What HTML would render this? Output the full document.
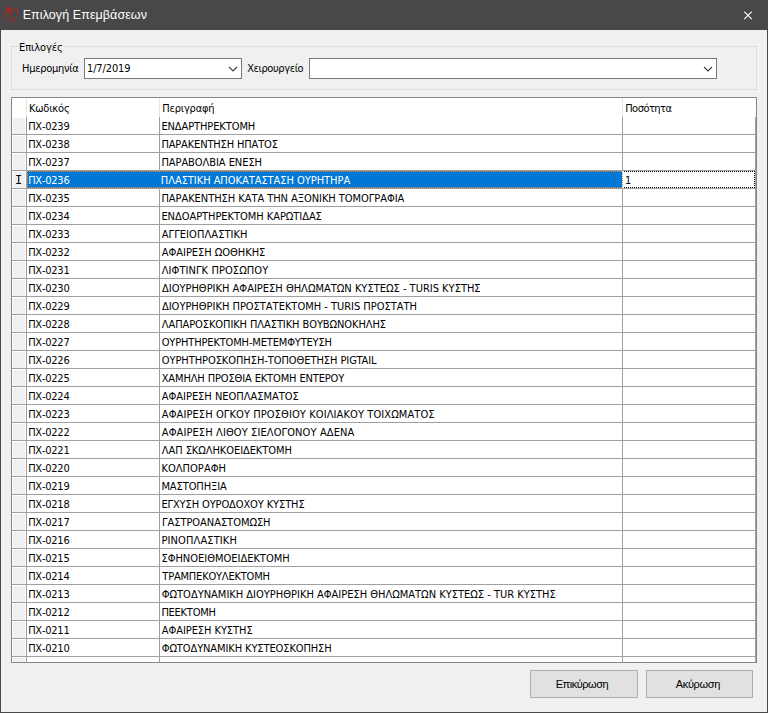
<!DOCTYPE html><html lang="el"><head><meta charset="utf-8"><title>Επιλογή Επεμβάσεων</title><style>
*{box-sizing:border-box;margin:0;padding:0}
html,body{width:768px;height:713px;overflow:hidden;background:#f0f0f0}
body{position:relative;font-family:"DejaVu Sans Condensed","Liberation Sans",sans-serif;font-size:11px;color:#000;line-height:1}
.abs{position:absolute}
#title{left:0;top:0;width:768px;height:30px;background:#484848}
#bl{left:0;top:30px;width:1px;height:683px;background:#484848}
#br{left:767px;top:30px;width:1px;height:683px;background:#484848}
#bb{left:0;top:712px;width:768px;height:1px;background:#484848}
#ttext{left:23px;top:7px;color:#fff;font-family:"Liberation Sans",sans-serif;font-size:12.5px;white-space:nowrap;line-height:16px}
#grp{left:11px;top:46px;width:746px;height:44px;border:1px solid #dcdcdc}
#grplbl{left:18px;top:41px;width:46px;height:13px;background:#f0f0f0}
.t{position:absolute;white-space:nowrap;line-height:13px}
.combo{background:#fff;border:1px solid #7a7a7a;height:21px}
#grid{left:11px;top:97px;width:746px;height:566px;border:1px solid #828790;background:#fff;overflow:hidden}
.hline{position:absolute;left:0;width:744px;height:1px;background:#a0a0a0}
.vline{position:absolute;top:19px;width:1px;height:547px;background:#a0a0a0}
.vlh{position:absolute;top:0;width:1px;height:19px;background:#e5e5e5}
.rh{position:absolute;left:1px;width:12px;background:#f0f0f0}
.btn{background:#e1e1e1;border:1px solid #adadad;height:28px}
.btn div{font-family:"Liberation Sans",sans-serif}
</style></head><body>
<div id="title" class="abs"></div>
<svg class="abs" style="left:0;top:0" width="24" height="30" viewBox="0 0 24 30"><defs><linearGradient id="fd" x1="0" y1="12" x2="0" y2="23" gradientUnits="userSpaceOnUse"><stop offset="0" stop-color="#b5241c"/><stop offset=".55" stop-color="#b5241c" stop-opacity=".8"/><stop offset="1" stop-color="#b5241c" stop-opacity=".35"/></linearGradient></defs><g fill="none" stroke-linecap="round"><path d="M9.7 12.9 C7.6 12.4 4.6 12.6 4.3 14.4 C4 16.5 5.4 18.3 7.4 20 C8.7 21.1 10 21.9 11.3 22.7" stroke="url(#fd)" stroke-width="1"/><path d="M9.6 16.4 C9.7 14.6 10.8 12.5 12.4 10.9 C13.8 9.6 16 8.9 17.2 9.9 C18.3 10.9 17.9 13 17.2 14.5 C16.4 16.2 15.2 17.7 13.7 19" stroke="#b5241c" stroke-width=".95"/></g><g fill="#b5241c"><ellipse cx="8.7" cy="9.4" rx="2.15" ry="2.75"/><circle cx="12.7" cy="19.7" r="1.5"/></g></svg>
<div id="ttext" class="abs"><span id="ttl" style="display:inline-block;letter-spacing:0.082px;margin-left:-0.33px">Επιλογή Επεμβάσεων</span></div>
<svg class="abs" style="left:743px;top:10px" width="10" height="10" viewBox="0 0 10 10"><path d="M1.2 1.6 L8.8 9.2 M8.8 1.6 L1.2 9.2" stroke="#fff" stroke-width="1.15" fill="none"/></svg>
<div id="bl" class="abs"></div><div id="br" class="abs"></div><div id="bb" class="abs"></div>
<div id="grp" class="abs"></div><div id="grplbl" class="abs"></div>
<div class="t" id="lg" style="left:19px;top:41px;letter-spacing:-0.108px;margin-left:0.07px">Επιλογές</div>
<div class="t" id="l1" style="left:23px;top:62px;letter-spacing:-0.288px;margin-left:-1.02px">Ημερομηνία</div>
<div class="abs combo" style="left:84px;top:58px;width:158px"><svg class="abs" style="left:143px;top:7px" width="11" height="7" viewBox="0 0 11 7"><path d="M1 1 L5 5 L9 1" stroke="#404040" stroke-width="1.1" fill="none"/></svg></div>
<div class="t" id="dt" style="left:88px;top:62px;letter-spacing:-0.130px;margin-left:-1.03px">1/7/2019</div>
<div class="t" id="l2" style="left:247px;top:62px;letter-spacing:-0.397px;margin-left:0.19px">Χειρουργείο</div>
<div class="abs combo" style="left:309px;top:58px;width:408px"><svg class="abs" style="left:393px;top:7px" width="11" height="7" viewBox="0 0 11 7"><path d="M1 1 L5 5 L9 1" stroke="#404040" stroke-width="1.1" fill="none"/></svg></div>
<div id="grid" class="abs"><div class="vlh" style="left:14px"></div><div class="vlh" style="left:147px"></div><div class="vlh" style="left:610px"></div><div class="rh" style="top:20px;height:16px"></div><div class="hline" style="top:36px"></div><div class="rh" style="top:38px;height:16px"></div><div class="hline" style="top:54px"></div><div class="rh" style="top:56px;height:16px"></div><div class="hline" style="top:72px"></div><div class="rh" style="top:74px;height:16px"></div><div class="hline" style="top:90px"></div><div class="rh" style="top:92px;height:16px"></div><div class="hline" style="top:108px"></div><div class="rh" style="top:110px;height:16px"></div><div class="hline" style="top:126px"></div><div class="rh" style="top:128px;height:16px"></div><div class="hline" style="top:144px"></div><div class="rh" style="top:146px;height:16px"></div><div class="hline" style="top:162px"></div><div class="rh" style="top:164px;height:16px"></div><div class="hline" style="top:180px"></div><div class="rh" style="top:182px;height:16px"></div><div class="hline" style="top:198px"></div><div class="rh" style="top:200px;height:16px"></div><div class="hline" style="top:216px"></div><div class="rh" style="top:218px;height:16px"></div><div class="hline" style="top:234px"></div><div class="rh" style="top:236px;height:16px"></div><div class="hline" style="top:252px"></div><div class="rh" style="top:254px;height:16px"></div><div class="hline" style="top:270px"></div><div class="rh" style="top:272px;height:16px"></div><div class="hline" style="top:288px"></div><div class="rh" style="top:290px;height:16px"></div><div class="hline" style="top:306px"></div><div class="rh" style="top:308px;height:16px"></div><div class="hline" style="top:324px"></div><div class="rh" style="top:326px;height:16px"></div><div class="hline" style="top:342px"></div><div class="rh" style="top:344px;height:16px"></div><div class="hline" style="top:360px"></div><div class="rh" style="top:362px;height:16px"></div><div class="hline" style="top:378px"></div><div class="rh" style="top:380px;height:16px"></div><div class="hline" style="top:396px"></div><div class="rh" style="top:398px;height:16px"></div><div class="hline" style="top:414px"></div><div class="rh" style="top:416px;height:16px"></div><div class="hline" style="top:432px"></div><div class="rh" style="top:434px;height:16px"></div><div class="hline" style="top:450px"></div><div class="rh" style="top:452px;height:16px"></div><div class="hline" style="top:468px"></div><div class="rh" style="top:470px;height:16px"></div><div class="hline" style="top:486px"></div><div class="rh" style="top:488px;height:16px"></div><div class="hline" style="top:504px"></div><div class="rh" style="top:506px;height:16px"></div><div class="hline" style="top:522px"></div><div class="rh" style="top:524px;height:16px"></div><div class="hline" style="top:540px"></div><div class="rh" style="top:542px;height:16px"></div><div class="hline" style="top:558px"></div><div class="rh" style="top:560px;height:16px"></div><div class="hline" style="top:576px"></div><div class="vline" style="left:14px"></div><div class="vline" style="left:147px"></div><div class="vline" style="left:610px"></div><div class="vline" style="left:743px"></div><div class="abs" style="left:15px;top:73px;width:595px;height:17px;background:#0078d7"></div><div class="abs fx" style="left:15px;top:73px;width:595px;height:1px;background:repeating-linear-gradient(90deg,#ff8728 0 1px,#0078d7 1px 2px)"></div><div class="abs fx" style="left:15px;top:89px;width:595px;height:1px;background:repeating-linear-gradient(90deg,#ff8728 0 1px,#0078d7 1px 2px)"></div><div class="abs fx" style="left:15px;top:73px;width:1px;height:17px;background:repeating-linear-gradient(180deg,#ff8728 0 1px,#0078d7 1px 2px)"></div><div class="abs" style="left:610px;top:73px;width:133px;height:17px;background:#fff"></div><div class="abs fx" style="left:610px;top:73px;width:133px;height:1px;background:repeating-linear-gradient(90deg,#000 0 1px,#fff 1px 2px)"></div><div class="abs fx" style="left:610px;top:89px;width:133px;height:1px;background:repeating-linear-gradient(90deg,#000 0 1px,#fff 1px 2px)"></div><div class="abs fx" style="left:742px;top:73px;width:1px;height:17px;background:repeating-linear-gradient(180deg,#000 0 1px,#fff 1px 2px)"></div><div class="abs fx" style="left:610px;top:73px;width:1px;height:17px;background:repeating-linear-gradient(180deg,#fff 0 1px,#a0a0a0 1px 2px)"></div><div class="t" id="h1" style="left:17px;top:4px;letter-spacing:-0.173px;margin-left:-0.11px">Κωδικός</div><div class="t" id="h2" style="left:151px;top:4px;letter-spacing:-0.195px;margin-left:-0.72px">Περιγραφή</div><div class="t" id="h3" style="left:614px;top:4px;letter-spacing:-0.523px;margin-left:-0.82px">Ποσότητα</div><div class="t c" id="c0" style="left:16px;top:22px;letter-spacing:-0.231px;margin-left:0.13px">ΠΧ-0239</div><div class="t d" id="d0" style="left:150px;top:22px;letter-spacing:-0.098px;margin-left:-0.62px">ΕΝΔΑΡΤΗΡΕΚΤΟΜΗ</div><div class="t c" id="c1" style="left:16px;top:40px;letter-spacing:-0.231px;margin-left:0.13px">ΠΧ-0238</div><div class="t d" id="d1" style="left:150px;top:40px;letter-spacing:-0.152px;margin-left:-0.62px">ΠΑΡΑΚΕΝΤΗΣΗ ΗΠΑΤΟΣ</div><div class="t c" id="c2" style="left:16px;top:58px;letter-spacing:-0.231px;margin-left:0.13px">ΠΧ-0237</div><div class="t d" id="d2" style="left:150px;top:58px;letter-spacing:-0.059px;margin-left:-0.62px">ΠΑΡΑΒΟΛΒΙΑ ΕΝΕΣΗ</div><div class="t c" id="c3" style="left:16px;top:76px;color:#fff;letter-spacing:-0.231px;margin-left:0.13px">ΠΧ-0236</div><div class="t d" id="d3" style="left:150px;top:76px;color:#fff;letter-spacing:-0.045px;margin-left:-1.22px">ΠΛΑΣΤΙΚΗ ΑΠΟΚΑΤΑΣΤΑΣΗ ΟΥΡΗΤΗΡΑ</div><div class="t c" id="c4" style="left:16px;top:94px;letter-spacing:-0.231px;margin-left:0.13px">ΠΧ-0235</div><div class="t d" id="d4" style="left:150px;top:94px;letter-spacing:-0.048px;margin-left:-0.62px">ΠΑΡΑΚΕΝΤΗΣΗ ΚΑΤΑ ΤΗΝ ΑΞΟΝΙΚΗ ΤΟΜΟΓΡΑΦΙΑ</div><div class="t c" id="c5" style="left:16px;top:112px;letter-spacing:-0.231px;margin-left:0.13px">ΠΧ-0234</div><div class="t d" id="d5" style="left:150px;top:112px;letter-spacing:-0.048px;margin-left:-0.62px">ΕΝΔΟΑΡΤΗΡΕΚΤΟΜΗ ΚΑΡΩΤΙΔΑΣ</div><div class="t c" id="c6" style="left:16px;top:130px;letter-spacing:-0.231px;margin-left:0.13px">ΠΧ-0233</div><div class="t d" id="d6" style="left:150px;top:130px;letter-spacing:0.069px;margin-left:-0.22px">ΑΓΓΕΙΟΠΛΑΣΤΙΚΗ</div><div class="t c" id="c7" style="left:16px;top:148px;letter-spacing:-0.231px;margin-left:0.13px">ΠΧ-0232</div><div class="t d" id="d7" style="left:150px;top:148px;letter-spacing:-0.034px;margin-left:-0.22px">ΑΦΑΙΡΕΣΗ ΩΟΘΗΚΗΣ</div><div class="t c" id="c8" style="left:16px;top:166px;letter-spacing:-0.231px;margin-left:0.13px">ΠΧ-0231</div><div class="t d" id="d8" style="left:150px;top:166px;letter-spacing:0.071px;margin-left:-0.22px">ΛΙΦΤΙΝΓΚ ΠΡΟΣΩΠΟΥ</div><div class="t c" id="c9" style="left:16px;top:184px;letter-spacing:-0.231px;margin-left:0.13px">ΠΧ-0230</div><div class="t d" id="d9" style="left:150px;top:184px;letter-spacing:-0.002px;margin-left:-0.06px">ΔΙΟΥΡΗΘΡΙΚΗ ΑΦΑΙΡΕΣΗ ΘΗΛΩΜΑΤΩΝ ΚΥΣΤΕΩΣ - TURIS ΚΥΣΤΗΣ</div><div class="t c" id="c10" style="left:16px;top:202px;letter-spacing:-0.231px;margin-left:0.13px">ΠΧ-0229</div><div class="t d" id="d10" style="left:150px;top:202px;letter-spacing:-0.015px;margin-left:-0.06px">ΔΙΟΥΡΗΘΡΙΚΗ ΠΡΟΣΤΑΤΕΚΤΟΜΗ - TURIS ΠΡΟΣΤΑΤΗ</div><div class="t c" id="c11" style="left:16px;top:220px;letter-spacing:-0.231px;margin-left:0.13px">ΠΧ-0228</div><div class="t d" id="d11" style="left:150px;top:220px;letter-spacing:-0.088px;margin-left:-0.22px">ΛΑΠΑΡΟΣΚΟΠΙΚΗ ΠΛΑΣΤΙΚΗ ΒΟΥΒΩΝΟΚΗΛΗΣ</div><div class="t c" id="c12" style="left:16px;top:238px;letter-spacing:-0.231px;margin-left:0.13px">ΠΧ-0227</div><div class="t d" id="d12" style="left:150px;top:238px;letter-spacing:-0.161px;margin-left:-0.28px">ΟΥΡΗΤΗΡΕΚΤΟΜΗ-ΜΕΤΕΜΦΥΤΕΥΣΗ</div><div class="t c" id="c13" style="left:16px;top:256px;letter-spacing:-0.231px;margin-left:0.13px">ΠΧ-0226</div><div class="t d" id="d13" style="left:150px;top:256px;letter-spacing:-0.070px;margin-left:-0.28px">ΟΥΡΗΤΗΡΟΣΚΟΠΗΣΗ-ΤΟΠΟΘΕΤΗΣΗ PIGTAIL</div><div class="t c" id="c14" style="left:16px;top:274px;letter-spacing:-0.231px;margin-left:0.13px">ΠΧ-0225</div><div class="t d" id="d14" style="left:150px;top:274px;letter-spacing:-0.135px;margin-left:-0.31px">ΧΑΜΗΛΗ ΠΡΟΣΘΙΑ ΕΚΤΟΜΗ ΕΝΤΕΡΟΥ</div><div class="t c" id="c15" style="left:16px;top:292px;letter-spacing:-0.231px;margin-left:0.13px">ΠΧ-0224</div><div class="t d" id="d15" style="left:150px;top:292px;letter-spacing:-0.020px;margin-left:-0.22px">ΑΦΑΙΡΕΣΗ ΝΕΟΠΛΑΣΜΑΤΟΣ</div><div class="t c" id="c16" style="left:16px;top:310px;letter-spacing:-0.231px;margin-left:0.13px">ΠΧ-0223</div><div class="t d" id="d16" style="left:150px;top:310px;letter-spacing:0.094px;margin-left:-0.22px">ΑΦΑΙΡΕΣΗ ΟΓΚΟΥ ΠΡΟΣΘΙΟΥ ΚΟΙΛΙΑΚΟΥ ΤΟΙΧΩΜΑΤΟΣ</div><div class="t c" id="c17" style="left:16px;top:328px;letter-spacing:-0.231px;margin-left:0.13px">ΠΧ-0222</div><div class="t d" id="d17" style="left:150px;top:328px;letter-spacing:0.105px;margin-left:-0.22px">ΑΦΑΙΡΕΣΗ ΛΙΘΟΥ ΣΙΕΛΟΓΟΝΟΥ ΑΔΕΝΑ</div><div class="t c" id="c18" style="left:16px;top:346px;letter-spacing:-0.231px;margin-left:0.13px">ΠΧ-0221</div><div class="t d" id="d18" style="left:150px;top:346px;letter-spacing:-0.068px;margin-left:-0.22px">ΛΑΠ ΣΚΩΛΗΚΟΕΙΔΕΚΤΟΜΗ</div><div class="t c" id="c19" style="left:16px;top:364px;letter-spacing:-0.231px;margin-left:0.13px">ΠΧ-0220</div><div class="t d" id="d19" style="left:150px;top:364px;letter-spacing:0.041px;margin-left:-0.62px">ΚΟΛΠΟΡΑΦΗ</div><div class="t c" id="c20" style="left:16px;top:382px;letter-spacing:-0.231px;margin-left:0.13px">ΠΧ-0219</div><div class="t d" id="d20" style="left:150px;top:382px;letter-spacing:-0.084px;margin-left:-0.62px">ΜΑΣΤΟΠΗΞΙΑ</div><div class="t c" id="c21" style="left:16px;top:400px;letter-spacing:-0.231px;margin-left:0.13px">ΠΧ-0218</div><div class="t d" id="d21" style="left:150px;top:400px;letter-spacing:-0.116px;margin-left:-0.62px">ΕΓΧΥΣΗ ΟΥΡΟΔΟΧΟΥ ΚΥΣΤΗΣ</div><div class="t c" id="c22" style="left:16px;top:418px;letter-spacing:-0.231px;margin-left:0.13px">ΠΧ-0217</div><div class="t d" id="d22" style="left:150px;top:418px;letter-spacing:-0.038px;margin-left:-0.02px">ΓΑΣΤΡΟΑΝΑΣΤΟΜΩΣΗ</div><div class="t c" id="c23" style="left:16px;top:436px;letter-spacing:-0.231px;margin-left:0.13px">ΠΧ-0216</div><div class="t d" id="d23" style="left:150px;top:436px;letter-spacing:0.121px;margin-left:-0.62px">ΡΙΝΟΠΛΑΣΤΙΚΗ</div><div class="t c" id="c24" style="left:16px;top:454px;letter-spacing:-0.231px;margin-left:0.13px">ΠΧ-0215</div><div class="t d" id="d24" style="left:150px;top:454px;letter-spacing:-0.011px;margin-left:-0.62px">ΣΦΗΝΟΕΙΘΜΟΕΙΔΕΚΤΟΜΗ</div><div class="t c" id="c25" style="left:16px;top:472px;letter-spacing:-0.231px;margin-left:0.13px">ΠΧ-0214</div><div class="t d" id="d25" style="left:150px;top:472px;letter-spacing:-0.201px;margin-left:0.35px">ΤΡΑΜΠΕΚΟΥΛΕΚΤΟΜΗ</div><div class="t c" id="c26" style="left:16px;top:490px;letter-spacing:-0.231px;margin-left:0.13px">ΠΧ-0213</div><div class="t d" id="d26" style="left:150px;top:490px;letter-spacing:-0.005px;margin-left:-0.28px">ΦΩΤΟΔΥΝΑΜΙΚΗ ΔΙΟΥΡΗΘΡΙΚΗ ΑΦΑΙΡΕΣΗ ΘΗΛΩΜΑΤΩΝ ΚΥΣΤΕΩΣ - TUR ΚΥΣΤΗΣ</div><div class="t c" id="c27" style="left:16px;top:508px;letter-spacing:-0.231px;margin-left:0.13px">ΠΧ-0212</div><div class="t d" id="d27" style="left:150px;top:508px;letter-spacing:-0.239px;margin-left:-0.62px">ΠΕΕΚΤΟΜΗ</div><div class="t c" id="c28" style="left:16px;top:526px;letter-spacing:-0.231px;margin-left:0.13px">ΠΧ-0211</div><div class="t d" id="d28" style="left:150px;top:526px;letter-spacing:-0.068px;margin-left:-0.22px">ΑΦΑΙΡΕΣΗ ΚΥΣΤΗΣ</div><div class="t c" id="c29" style="left:16px;top:544px;letter-spacing:-0.231px;margin-left:0.13px">ΠΧ-0210</div><div class="t d" id="d29" style="left:150px;top:544px;letter-spacing:-0.108px;margin-left:-0.28px">ΦΩΤΟΔΥΝΑΜΙΚΗ ΚΥΣΤΕΟΣΚΟΠΗΣΗ</div><div class="t" id="q" style="left:613px;top:76px">1</div><div class="t" id="ib" style="left:3px;top:77px;font-family:'Liberation Mono',monospace;font-size:12px">I</div></div>
<div class="abs btn" style="left:530px;top:670px;width:108px"><div class="t" id="b1" style="left:25px;top:7px;letter-spacing:-0.466px;margin-left:-0.26px">Επικύρωση</div></div>
<div class="abs btn" style="left:646px;top:670px;width:107px"><div class="t" id="b2" style="left:29px;top:7px;letter-spacing:-0.350px;margin-left:-0.19px">Ακύρωση</div></div>
</body></html>
